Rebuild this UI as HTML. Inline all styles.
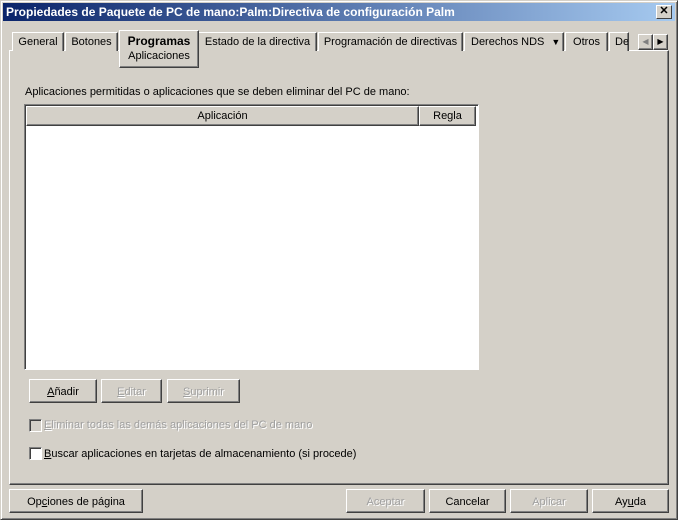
<!DOCTYPE html>
<html><head><meta charset="utf-8"><style>
*{box-sizing:border-box;margin:0;padding:0}
body{width:678px;height:520px;background:#d4d0c8;font-family:"Liberation Sans",sans-serif;font-size:11px;color:#000;position:relative;overflow:hidden}
.a{position:absolute;white-space:nowrap}
.win{left:0;top:0;width:678px;height:520px;border:1px solid;border-color:#d4d0c8 #404040 #404040 #d4d0c8;box-shadow:inset 1px 1px #fff,inset -1px -1px #808080}
.title{left:3px;top:3px;width:672px;height:18px;background:linear-gradient(90deg,#0a246a,#a6caf0);color:#fff;font-weight:bold;font-size:12px;line-height:18px;padding-left:3px}
.x{left:656px;top:5px;width:16px;height:14px;background:#d4d0c8;border:1px solid;border-color:#fff #404040 #404040 #fff;color:#000;font-size:11px;line-height:11px;text-align:center;font-weight:bold}
.tab{top:32px;height:19px;border:1px solid;border-color:#fff #404040 transparent #fff;border-bottom:none;line-height:19px;text-align:center;background:#d4d0c8;box-shadow:inset -1px 0 #808080}
.panel{left:9px;top:50px;width:660px;height:435px;border:1px solid;border-color:#fff #404040 #404040 #fff;box-shadow:inset -1px -1px #808080}
.btn{height:24px;border:1px solid;border-color:#fff #404040 #404040 #fff;box-shadow:inset -1px -1px #808080;text-align:center;line-height:24px;background:#d4d0c8}
.dis{color:#a0a0a0;text-shadow:1px 1px #fff}
.cb{width:13px;height:13px;border:1px solid;border-color:#808080 #fff #fff #808080;box-shadow:inset 1px 1px #404040}
u{text-decoration:underline}
</style></head><body>
<div class="a win"></div>
<div class="a title">Propiedades de Paquete de PC de mano:Palm:Directiva de configuración Palm</div>
<div class="a x">✕</div>
<div class="a panel"></div>
<div class="a tab" style="left:12px;width:52px">General</div>
<div class="a tab" style="left:65px;width:53px">Botones</div>
<div class="a tab" style="left:198px;width:119px">Estado de la directiva</div>
<div class="a tab" style="left:318px;width:145px">Programación de directivas</div>
<div class="a tab" style="left:464px;width:100px;text-align:left;padding-left:6px">Derechos NDS <span style="font-size:9px;margin-left:4px">▼</span></div>
<div class="a tab" style="left:565px;width:43px">Otros</div>
<div class="a tab" style="left:609px;width:20px;text-align:left;padding-left:5px;overflow:hidden">De</div>
<div class="a" style="left:119px;top:30px;width:80px;height:38px;border:1px solid;border-color:#fff #404040 #404040 #fff;box-shadow:inset -1px -1px #808080;background:#d4d0c8;text-align:center;line-height:14px;padding-top:3px"><b style="font-size:12px">Programas</b><br>Aplicaciones</div>
<div class="a btn" style="left:638px;top:34px;width:15px;height:16px;line-height:14px;font-size:8px;color:#808080">◀</div>
<div class="a btn" style="left:653px;top:34px;width:15px;height:16px;line-height:14px;font-size:8px">▶</div>
<div class="a" style="left:25px;top:86px">Aplicaciones permitidas o aplicaciones que se deben eliminar del PC de mano:</div>
<div class="a" style="left:24px;top:104px;width:455px;height:266px;background:#fff;border:1px solid;border-color:#808080 #fff #fff #808080;box-shadow:inset 1px 1px #404040"></div>
<div class="a btn" style="left:26px;top:106px;width:393px;height:20px;line-height:19px">Aplicación</div>
<div class="a btn" style="left:419px;top:106px;width:57px;height:20px;line-height:19px">Regla</div>
<div class="a btn" style="left:29px;top:379px;width:68px"><u>A</u>ñadir</div>
<div class="a btn dis" style="left:101px;top:379px;width:61px"><u>E</u>ditar</div>
<div class="a btn dis" style="left:167px;top:379px;width:73px"><u>S</u>uprimir</div>
<div class="a cb" style="left:29px;top:419px;background:#d4d0c8"></div>
<div class="a dis" style="left:44px;top:419px"><u>E</u>liminar todas las demás aplicaciones del PC de mano</div>
<div class="a cb" style="left:29px;top:447px;background:#fff"></div>
<div class="a" style="left:44px;top:448px"><u>B</u>uscar aplicaciones en tarjetas de almacenamiento (si procede)</div>
<div class="a btn" style="left:9px;top:489px;width:134px">Op<u>c</u>iones de página</div>
<div class="a btn dis" style="left:346px;top:489px;width:79px">Aceptar</div>
<div class="a btn" style="left:429px;top:489px;width:77px">Cancelar</div>
<div class="a btn dis" style="left:510px;top:489px;width:78px">Aplicar</div>
<div class="a btn" style="left:592px;top:489px;width:77px">Ay<u>u</u>da</div>
</body></html>
